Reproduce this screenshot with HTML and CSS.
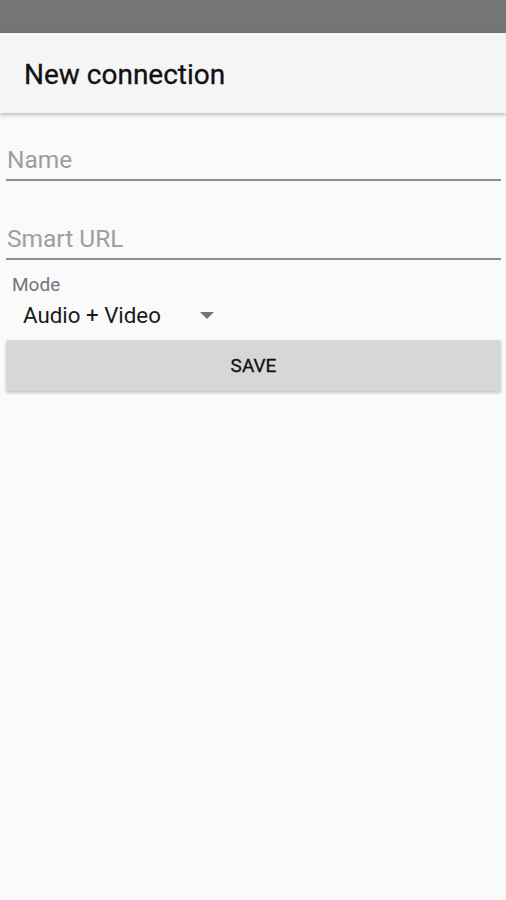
FILE: index.html
```html
<!DOCTYPE html>
<html lang="en">
<head>
    <meta charset="UTF-8">
    <meta name="viewport" content="width=device-width, initial-scale=1.0">
    <title>New connection</title>
    <link rel="stylesheet" href="styles.css">
</head>
<body>
    <div class="status-bar"></div>
    <header class="app-bar">
        <h1>New connection</h1>
    </header>

    <main class="form">
        <div class="field">
            <input type="text" placeholder="Name">
        </div>
        <div class="field">
            <input type="text" placeholder="Smart URL">
        </div>

        <label class="mode-label">Mode</label>
        <div class="spinner">
            <span class="spinner-value">Audio + Video</span>
            <svg class="spinner-arrow" width="14" height="8" viewBox="0 0 14 8">
                <path d="M0 0 L14 0 L7 7 Z" fill="#757575"/>
            </svg>
        </div>

        <button class="save">SAVE</button>
    </main>
</body>
</html>
```

FILE: styles.css
```css
body {
    margin: 0;
    font-family: Roboto, 'Noto Sans', sans-serif;
    background: #fafafa;
    height: 100vh;
}
.status-bar {
    height: 33px;
    background: #757575;
}
.app-bar {
    height: 80px;
    background: #f5f5f5;
    box-shadow: 0 2px 4px rgba(0, 0, 0, 0.25);
    display: flex;
    align-items: center;
    padding-left: 24px;
    position: relative;
}
.app-bar h1 {
    margin: 0;
    font-size: 28px;
    font-weight: 400;
    color: #111;
    padding-top: 2px;
    -webkit-text-stroke: 0.3px #111;
}
.form {
    padding: 0 5px 0 6px;
}
.field {
    padding-top: 43px;
}
.field:first-child {
    padding-top: 32px;
}
.field input {
    display: block;
    width: 100%;
    box-sizing: border-box;
    border: none;
    border-bottom: 2px solid #8d8d8d;
    background: transparent;
    font-family: inherit;
    font-size: 24.5px;
    padding: 0 0 5px 1px;
    height: 36px;
    outline: none;
}
.field input::placeholder {
    color: #9e9e9e;
}
.mode-label {
    display: block;
    margin: 15px 0 0 6px;
    font-size: 19px;
    line-height: 20px;
    color: #757575;
}
.spinner {
    display: flex;
    align-items: center;
    height: 34px;
    padding: 3px 0 0 17px;
}
.spinner-value {
    font-size: 22.3px;
    color: #1a1a1a;
    width: 177px;
}
.spinner-arrow {
    margin-top: 2px;
}
.save {
    display: block;
    width: 100%;
    height: 51px;
    margin-top: 8px;
    border: none;
    border-radius: 2px;
    background: #d6d7d6;
    box-shadow: 0 2px 3px rgba(0, 0, 0, 0.2);
    font-family: inherit;
    font-size: 19px;
    font-weight: 400;
    color: #111;
    -webkit-text-stroke: 0.3px #111;
}
```
